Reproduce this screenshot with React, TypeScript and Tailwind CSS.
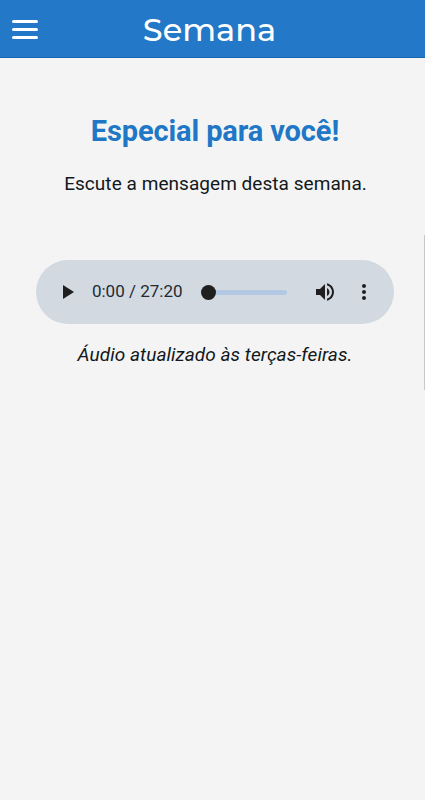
import { MdMoreVert, MdPlayArrow, MdVolumeUp } from "react-icons/md";

const currentTime = 0;
const duration = 1640;

function formatTime(seconds: number) {
  const rest = String(seconds % 60).padStart(2, "0");
  return `${Math.floor(seconds / 60)}:${rest}`;
}

function Header() {
  return (
    <header className="relative flex h-[58px] items-center justify-center border-b border-[#1767b0] bg-[#2378c8]">
      <button aria-label="Menu" className="absolute left-3 top-5 flex w-[26px] flex-col gap-[5px]">
        <span className="h-[3px] rounded-full bg-white" />
        <span className="h-[3px] rounded-full bg-white" />
        <span className="h-[3px] rounded-full bg-white" />
      </button>
      <h1 className="pr-[6px] pt-[3px] font-['Montserrat','Inter',sans-serif] text-[32px] font-medium leading-none text-white">
        Semana
      </h1>
    </header>
  );
}

function AudioPlayer() {
  return (
    <div className="mx-auto flex h-16 w-[358px] items-center rounded-full bg-[#d2d9e1] text-[#1f1f1f]">
      <button aria-label="Play" className="ml-[19px]">
        <MdPlayArrow size={24} />
      </button>
      <span className="ml-[12.5px] w-[91.5px] whitespace-nowrap text-[17px] text-[#222b35]">
        {formatTime(currentTime)} / {formatTime(duration)}
      </span>
      <div className="ml-[18px] flex w-[86px] items-center">
        <span className="size-[15px] shrink-0 rounded-full bg-[#1f1f1f]" />
        <span className="h-[5px] flex-1 rounded-r-full bg-[#b3c9e3]" />
      </div>
      <button aria-label="Volume" className="ml-[26px]">
        <MdVolumeUp size={24} />
      </button>
      <button aria-label="Mais" className="ml-[15px]">
        <MdMoreVert size={24} />
      </button>
    </div>
  );
}

export default function App() {
  return (
    <div className="relative min-h-screen bg-[#f4f4f4] font-['Roboto',sans-serif] text-[#111820]">
      <Header />
      <main className="pt-[55px] text-center">
        <h2 className="pl-[5px] text-[29px] font-bold leading-9 tracking-[-0.12px] text-[#2077c6]">
          Especial para você!
        </h2>
        <p className="mt-[21px] pl-1.5 text-[19px] leading-7 tracking-[0.05px]">Escute a mensagem desta semana.</p>
        <div className="mt-[62px] pl-[5px]">
          <AudioPlayer />
        </div>
        <p className="mt-[17px] pl-[5px] text-[19px] italic leading-7 tracking-[0.05px]">
          Áudio atualizado às terças-feiras.
        </p>
      </main>
      <div className="absolute right-0 top-[235px] h-[155px] w-px bg-[#c8c8c8]" />
    </div>
  );
}
